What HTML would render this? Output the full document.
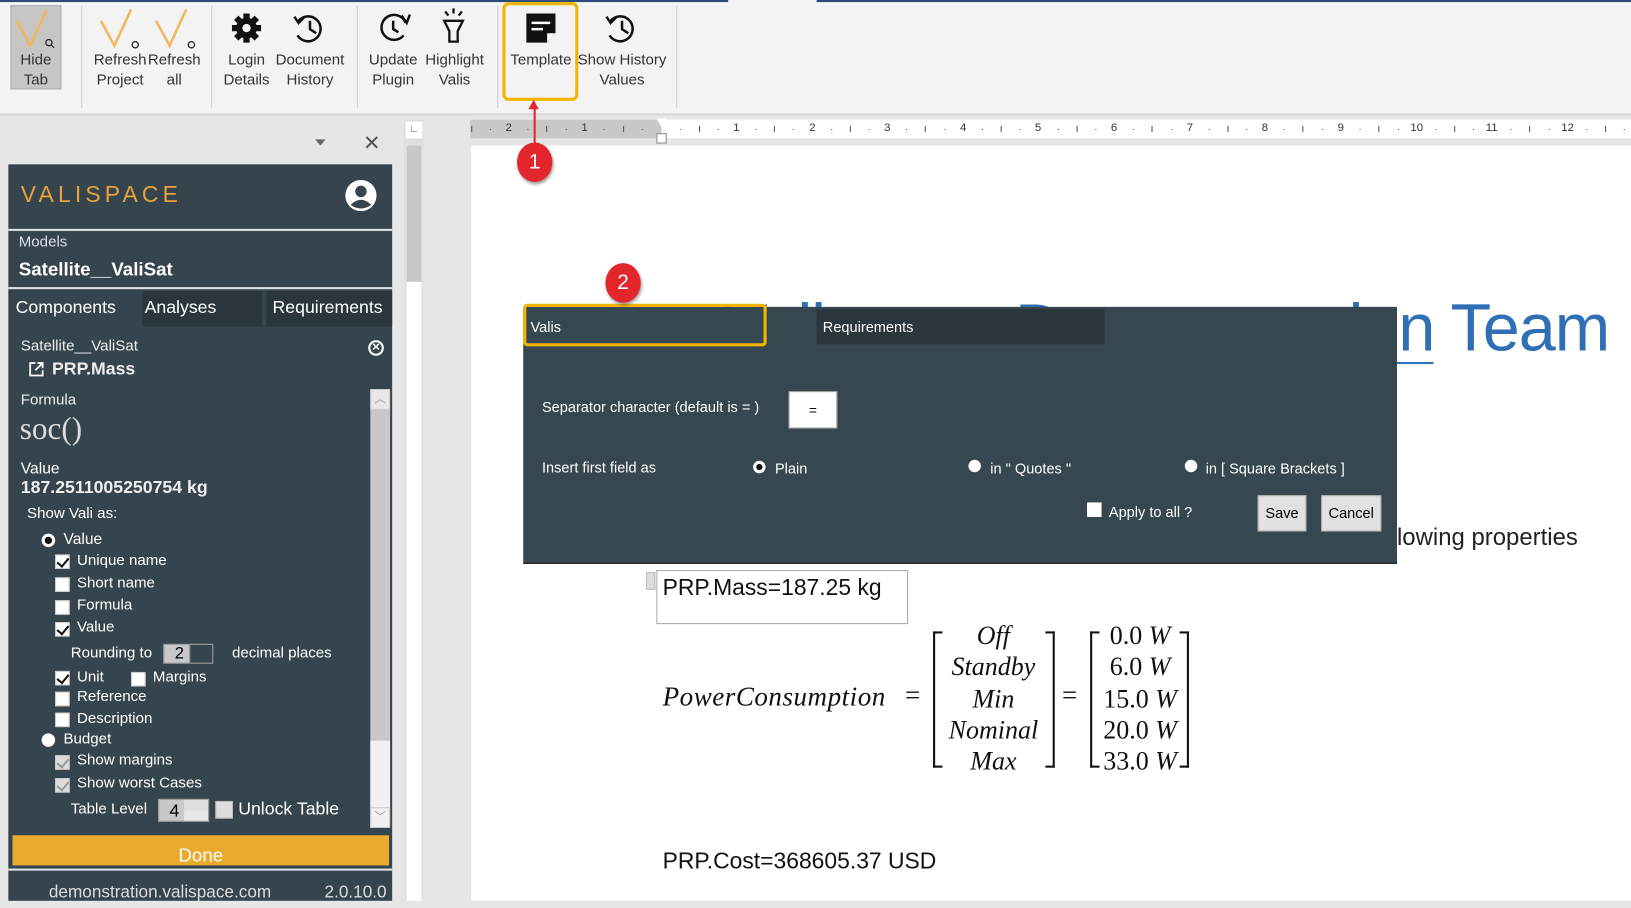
<!DOCTYPE html>
<html><head><meta charset="utf-8"><style>
*{box-sizing:border-box;margin:0;padding:0}
html,body{width:1631px;height:908px;overflow:hidden;background:#e6e6e6}
#w{position:absolute;left:0;top:0;width:1568px;height:873px;transform:scale(1.0402);transform-origin:0 0;font-family:"Liberation Sans",sans-serif;overflow:hidden}
.a{position:absolute}
.rb{font-size:14.5px;color:#333;text-align:center;line-height:19px}
.sep{position:absolute;top:6px;width:1px;height:98px;background:#cfcfcf}
.p{color:#fff;position:absolute;font-size:15px}
.cb{position:absolute;width:14px;height:14px;background:#fff;border:1px solid #ccc}
.ck::after{content:"";position:absolute;left:3px;top:0px;width:5px;height:9px;border:solid #111;border-width:0 2px 2px 0;transform:rotate(40deg)}
.cg{background:#ddd}.cg::after{border-color:#999!important}
.d{color:#fff;position:absolute;font-size:14px}
.m{font-family:"Liberation Serif",serif;font-style:italic;font-size:26px;color:#111;position:absolute}
.red{position:absolute;width:34px;height:38px;border-radius:50%;background:#e3262b;color:#fff;font-size:20px;text-align:center;line-height:38px;box-shadow:1px 2px 3px rgba(0,0,0,.4)}
.rn{position:absolute;top:117px;font-size:11px;color:#333;width:20px;margin-left:-10px;text-align:center}
.tk{position:absolute;top:121px;width:1px;height:6px;background:#555}
.dt{position:absolute;top:124px;width:1px;height:1px;background:#555}
</style></head><body><div id="w">
<!-- ribbon -->
<div class="a" style="left:0;top:0;width:1568px;height:111px;background:#f3f3f3;border-bottom:2px solid #d8d8d8"></div>
<div class="a" style="left:0;top:0;width:700px;height:2px;background:#2b4b7a"></div>
<div class="a" style="left:785px;top:0;width:783px;height:2px;background:#2b4b7a"></div>
<div class="a" style="left:10px;top:5px;width:49px;height:81px;background:#c6c6c6;border:1px solid #aaa"></div>
<svg class="a" style="left:0;top:0" width="700" height="60">
<g fill="none" stroke="#f0b860" stroke-width="2.5"><path d="M16 20 L29 44 L45 9"/><path d="M97 20 L110 44 L126 9"/><path d="M150 20 L163 44 L179 9"/></g>
<g fill="none" stroke="#222" stroke-width="1.2"><circle cx="47" cy="41" r="3"/><path d="M49 43 L52 46"/><circle cx="130" cy="43" r="3"/><circle cx="184" cy="43" r="3"/></g>
<g transform="translate(237,27)"><circle r="10" fill="#111"/><g fill="#111"><rect x="-3" y="-14" width="6" height="28"/><rect x="-14" y="-3" width="28" height="6"/><rect x="-3" y="-14" width="6" height="28" transform="rotate(45)"/><rect x="-3" y="-14" width="6" height="28" transform="rotate(-45)"/></g><circle r="4" fill="#f3f3f3"/></g>
<g fill="none" stroke="#111" stroke-width="2.4"><path d="M287 20 A12 12 0 1 1 286 34"/><path d="M298 20 V28 L304 32"/><path d="M283 16 L287 22 L292 17"/></g>
<g fill="none" stroke="#111" stroke-width="2.4"><path d="M390 22 A12 12 0 1 0 388 34"/><path d="M378 20 V28 L383 31"/><path d="M386 15 L391 22 L394 14"/></g>
<g fill="none" stroke="#111" stroke-width="2.2"><path d="M427 20 H445 L440 30 V40 H432 V30 Z"/><path d="M436 8 V13 M428 11 L431 15 M444 11 L441 15"/></g>
<g><path d="M506 13 H534 V32 L526 41 H506 Z" fill="#111"/><path d="M511 22 H529 M511 28 H522" stroke="#fff" stroke-width="2.5"/><path d="M526 41 V32 H534" fill="#fff"/></g>
<g fill="none" stroke="#111" stroke-width="2.4"><path d="M587 20 A12 12 0 1 1 586 34"/><path d="M598 20 V28 L604 32"/><path d="M583 16 L587 22 L592 17"/></g>
</svg>
<div class="a rb" style="left:10px;top:49px;width:49px">Hide<br>Tab</div>
<div class="a rb" style="left:88px;top:49px;width:55px">Refresh<br>Project</div>
<div class="a rb" style="left:140px;top:49px;width:55px">Refresh<br>all</div>
<div class="a rb" style="left:212px;top:49px;width:50px">Login<br>Details</div>
<div class="a rb" style="left:262px;top:49px;width:72px">Document<br>History</div>
<div class="a rb" style="left:352px;top:49px;width:52px">Update<br>Plugin</div>
<div class="a rb" style="left:404px;top:49px;width:66px">Highlight<br>Valis</div>
<div class="a rb" style="left:487px;top:49px;width:66px">Template</div>
<div class="a rb" style="left:552px;top:49px;width:92px">Show History<br>Values</div>
<div class="sep" style="left:78px"></div><div class="sep" style="left:203px"></div><div class="sep" style="left:343px"></div><div class="sep" style="left:478px"></div><div class="sep" style="left:650px"></div>
<div class="a" style="left:483px;top:2px;width:73px;height:95px;border:3px solid #f4b400;border-radius:6px"></div>
<!-- left task pane -->
<div class="a" style="left:0;top:113px;width:384px;height:760px;background:#e6e6e6"></div>
<div class="a" style="left:303px;top:134px;border:5px solid transparent;border-top:6px solid #666"></div>
<div class="a" style="left:349px;top:125px;font-size:20px;color:#555">✕</div>
<div class="a" style="left:8px;top:158px;width:369px;height:715px;background:#36444d"></div>
<div class="a" style="left:20px;top:174px;font-size:22px;letter-spacing:4px;color:#e8a33a">VALISPACE</div>
<svg class="a" style="left:331px;top:172px" width="32" height="32"><circle cx="16" cy="16" r="15" fill="#fff"/><circle cx="16" cy="12" r="5.5" fill="#36444d"/><path d="M6 25 Q16 15 26 25 Q16 32 6 25Z" fill="#36444d"/></svg>
<div class="a" style="left:8px;top:220px;width:369px;height:2px;background:#dfe3e5"></div>
<div class="p" style="left:18px;top:225px;font-size:14.5px;color:#dde">Models</div>
<div class="p" style="left:18px;top:249px;font-size:18px;font-weight:bold">Satellite__ValiSat</div>
<div class="a" style="left:8px;top:276px;width:369px;height:2px;background:#dfe3e5"></div>
<div class="a" style="left:137px;top:280px;width:115px;height:34px;background:#2b353c"></div>
<div class="a" style="left:256px;top:280px;width:121px;height:34px;background:#2b353c"></div>
<div class="p" style="left:15px;top:286px;font-size:17px">Components</div>
<div class="p" style="left:139px;top:286px;font-size:17px">Analyses</div>
<div class="p" style="left:262px;top:286px;font-size:17px">Requirements</div>
<div class="p" style="left:20px;top:325px;font-size:14.5px;color:#eee">Satellite__ValiSat</div>
<div class="a" style="left:354px;top:327px;width:15px;height:15px;border:2px solid #fff;border-radius:50%;color:#fff;font-size:10px;line-height:11px;text-align:center;font-weight:bold">✕</div>
<svg class="a" style="left:27px;top:347px" width="16" height="16"><path d="M7 2 H2 V14 H14 V9 M9 2 H14 V7 M14 2 L7 9" fill="none" stroke="#fff" stroke-width="1.7"/></svg>
<div class="p" style="left:50px;top:345px;font-size:17px;font-weight:bold;color:#eee">PRP.Mass</div>
<div class="p" style="left:20px;top:377px;font-size:14.5px;color:#eee">Formula</div>
<div class="p" style="left:19px;top:396px;font-size:30px;font-family:'Liberation Serif',serif;color:#ddd">soc()</div>
<div class="p" style="left:20px;top:442px;font-size:15px">Value</div>
<div class="p" style="left:20px;top:459px;font-size:17px;font-weight:bold;color:#eee">187.2511005250754 kg</div>
<div class="p" style="left:26px;top:486px;font-size:14.5px">Show Vali as:</div>
<div class="a" style="left:356px;top:374px;width:19px;height:422px;background:#c8c8c8"></div>
<div class="a" style="left:356px;top:374px;width:19px;height:20px;background:#e8e8e8;border:1px solid #ccc;color:#999;font-size:11px;text-align:center">︿</div>
<div class="a" style="left:356px;top:712px;width:19px;height:84px;background:#f0f0f0"></div>
<div class="a" style="left:356px;top:776px;width:19px;height:20px;background:#f0f0f0;border:1px solid #ccc;color:#999;font-size:11px;text-align:center">﹀</div>
<div class="a" style="left:40px;top:513px;width:13px;height:13px;border-radius:50%;background:#fff"></div><div class="a" style="left:43px;top:516px;width:7px;height:7px;border-radius:50%;background:#111"></div>
<div class="p" style="left:61px;top:510px">Value</div>
<div class="cb ck" style="left:53px;top:533px"></div><div class="p" style="left:74px;top:531px;font-size:14.5px">Unique name</div>
<div class="cb" style="left:53px;top:555px"></div><div class="p" style="left:74px;top:553px;font-size:14.5px">Short name</div>
<div class="cb" style="left:53px;top:577px"></div><div class="p" style="left:74px;top:574px;font-size:14.5px">Formula</div>
<div class="cb ck" style="left:53px;top:598px"></div><div class="p" style="left:74px;top:595px;font-size:14.5px">Value</div>
<div class="p" style="left:68px;top:620px;font-size:14.5px">Rounding to</div>
<div class="a" style="left:157px;top:619px;width:48px;height:19px;background:#c8c8c8;border:1px solid #999;font-size:16px;padding-left:10px;line-height:18px">2</div>
<div class="a" style="left:182px;top:619px;width:23px;height:19px;background:#36444d;border:1px solid #999"></div>
<div class="p" style="left:223px;top:620px;font-size:14.5px">decimal places</div>
<div class="cb ck" style="left:53px;top:645px"></div><div class="p" style="left:74px;top:643px;font-size:14.5px">Unit</div>
<div class="cb" style="left:126px;top:646px"></div><div class="p" style="left:147px;top:643px;font-size:14.5px">Margins</div>
<div class="cb" style="left:53px;top:665px"></div><div class="p" style="left:74px;top:662px;font-size:14.5px">Reference</div>
<div class="cb" style="left:53px;top:685px"></div><div class="p" style="left:74px;top:683px;font-size:14.5px">Description</div>
<div class="a" style="left:40px;top:705px;width:13px;height:13px;border-radius:50%;background:#fff"></div>
<div class="p" style="left:61px;top:703px;font-size:14.5px">Budget</div>
<div class="cb ck cg" style="left:53px;top:726px"></div><div class="p" style="left:74px;top:723px;font-size:14.5px">Show margins</div>
<div class="cb ck cg" style="left:53px;top:748px"></div><div class="p" style="left:74px;top:745px;font-size:14.5px">Show worst Cases</div>
<div class="p" style="left:68px;top:770px;font-size:14.5px">Table Level</div>
<div class="a" style="left:152px;top:768px;width:49px;height:22px;background:#c8c8c8;border:1px solid #999;font-size:17px;padding-left:10px;line-height:22px">4</div>
<div class="a" style="left:177px;top:769px;width:23px;height:20px;background:#e8e8e8;border-top:10px solid #ddd"></div>
<div class="a" style="left:207px;top:770px;width:17px;height:17px;background:#ddd;border:1px solid #bbb"></div>
<div class="p" style="left:229px;top:768px;font-size:17px">Unlock Table</div>
<div class="a" style="left:12px;top:803px;width:362px;height:29px;background:#eaaa2e;color:#fff;font-size:18px;text-align:center;line-height:38px;overflow:hidden">Done</div>
<div class="a" style="left:8px;top:835px;width:369px;height:2px;background:#dfe3e5"></div>
<div class="p" style="left:47px;top:849px;font-size:16.5px;color:#ddd">demonstration.valispace.com</div>
<div class="p" style="left:312px;top:849px;font-size:16.5px;color:#ddd">2.0.10.0</div>
<!-- rulers -->
<div class="a" style="left:388px;top:115px;width:19px;height:758px;background:#e0e0e0"></div>
<div class="a" style="left:390px;top:117px;width:16px;height:16px;background:#fff;font-size:10px;color:#555;text-align:center;line-height:16px">∟</div>
<div class="a" style="left:391px;top:140px;width:14px;height:131px;background:#c8c8c8"></div>
<div class="a" style="left:391px;top:271px;width:14px;height:602px;background:#fff"></div>
<div class="a" style="left:452px;top:115px;width:1116px;height:18px;background:#fff"></div>
<div class="a" style="left:452px;top:115px;width:184px;height:18px;background:#c8c8c8"></div>
<div class="rn" style="left:489px">2</div><div class="rn" style="left:562px">1</div>
<div class="rn" style="left:708px">1</div><div class="rn" style="left:781px">2</div><div class="rn" style="left:853px">3</div><div class="rn" style="left:926px">4</div><div class="rn" style="left:998px">5</div><div class="rn" style="left:1071px">6</div><div class="rn" style="left:1144px">7</div><div class="rn" style="left:1216px">8</div><div class="rn" style="left:1289px">9</div><div class="rn" style="left:1362px">10</div><div class="rn" style="left:1434px">11</div><div class="rn" style="left:1507px">12</div>
<div class="tk" style="left:453px"></div><div class="tk" style="left:525px"></div><div class="tk" style="left:599px"></div><div class="tk" style="left:672px"></div><div class="tk" style="left:744px"></div><div class="tk" style="left:817px"></div><div class="tk" style="left:889px"></div><div class="tk" style="left:962px"></div><div class="tk" style="left:1035px"></div><div class="tk" style="left:1107px"></div><div class="tk" style="left:1180px"></div><div class="tk" style="left:1252px"></div><div class="tk" style="left:1325px"></div><div class="tk" style="left:1398px"></div><div class="tk" style="left:1470px"></div><div class="tk" style="left:1543px"></div>
<div class="dt" style="left:471px"></div><div class="dt" style="left:507px"></div><div class="dt" style="left:544px"></div><div class="dt" style="left:580px"></div><div class="dt" style="left:617px"></div><div class="dt" style="left:654px"></div><div class="dt" style="left:690px"></div><div class="dt" style="left:726px"></div><div class="dt" style="left:762px"></div><div class="dt" style="left:799px"></div><div class="dt" style="left:835px"></div><div class="dt" style="left:871px"></div><div class="dt" style="left:908px"></div><div class="dt" style="left:944px"></div><div class="dt" style="left:980px"></div><div class="dt" style="left:1017px"></div><div class="dt" style="left:1053px"></div><div class="dt" style="left:1089px"></div><div class="dt" style="left:1126px"></div><div class="dt" style="left:1162px"></div><div class="dt" style="left:1198px"></div><div class="dt" style="left:1234px"></div><div class="dt" style="left:1271px"></div><div class="dt" style="left:1307px"></div><div class="dt" style="left:1344px"></div><div class="dt" style="left:1380px"></div><div class="dt" style="left:1416px"></div><div class="dt" style="left:1452px"></div><div class="dt" style="left:1489px"></div><div class="dt" style="left:1525px"></div><div class="dt" style="left:1561px"></div>
<div class="a" style="left:631px;top:114px;border:5px solid transparent;border-top:8px solid #fff"></div>
<div class="a" style="left:631px;top:128px;width:10px;height:10px;background:#fff;border:1px solid #888"></div>
<!-- page -->
<div class="a" style="left:453px;top:140px;width:1115px;height:726px;background:#fff"></div>
<div class="a" style="left:0;top:866px;width:1568px;height:7px;background:#e6e6e6"></div>
<div class="a" style="right:21px;top:278px;font-size:64px;letter-spacing:-1px;color:#2f6fb5;white-space:nowrap;text-align:right">Valispace Demonstration Team</div>
<div class="a" style="left:1343px;top:348px;width:35px;height:2px;background:#2f6fb5"></div>
<div class="a" style="left:1343px;top:503px;font-size:23px;color:#222">lowing properties</div>
<!-- dialog -->
<div class="a" style="left:503px;top:295px;width:840px;height:247px;background:#37474f;border-bottom:1px solid #111"></div>
<div class="a" style="left:785px;top:297px;width:277px;height:34px;background:#2b363d"></div>
<div class="a" style="left:503px;top:292px;width:234px;height:41px;border:3px solid #f4b400;border-radius:4px"></div>
<div class="d" style="left:510px;top:306px">Valis</div>
<div class="d" style="left:791px;top:306px">Requirements</div>
<div class="d" style="left:521px;top:383px">Separator character (default is = )</div>
<div class="a" style="left:758px;top:376px;width:47px;height:36px;background:#fff;border:1px solid #999;font-size:13px;text-align:center;line-height:36px">=</div>
<div class="d" style="left:521px;top:441px">Insert first field as</div>
<div class="a" style="left:724px;top:443px;width:12px;height:12px;border-radius:50%;background:#fff"></div><div class="a" style="left:727px;top:446px;width:6px;height:6px;border-radius:50%;background:#111"></div>
<div class="d" style="left:745px;top:442px">Plain</div>
<div class="a" style="left:931px;top:442px;width:12px;height:12px;border-radius:50%;background:#fff"></div>
<div class="d" style="left:952px;top:442px">in " Quotes "</div>
<div class="a" style="left:1139px;top:442px;width:12px;height:12px;border-radius:50%;background:#fff"></div>
<div class="d" style="left:1159px;top:442px">in [ Square Brackets ]</div>
<div class="a" style="left:1045px;top:483px;width:14px;height:14px;background:#fff"></div>
<div class="d" style="left:1066px;top:484px">Apply to all ?</div>
<div class="a" style="left:1209px;top:476px;width:47px;height:35px;background:#e1e1e1;border:1px solid #aaa;font-size:14px;text-align:center;line-height:33px">Save</div>
<div class="a" style="left:1270px;top:476px;width:58px;height:35px;background:#e1e1e1;border:1px solid #aaa;font-size:14px;text-align:center;line-height:33px">Cancel</div>
<!-- doc content -->
<div class="a" style="left:621px;top:550px;width:9px;height:17px;background:#ddd;border:1px solid #bbb"></div>
<div class="a" style="left:631px;top:548px;width:242px;height:52px;border:1px solid #aaa"></div>
<div class="a" style="left:637px;top:552px;font-size:22px;color:#111">PRP.Mass=187.25 kg</div>
<div class="m" style="left:637px;top:655px;letter-spacing:0.5px">PowerConsumption</div>
<div class="a" style="left:870px;top:654px;font-size:26px;color:#111;font-family:'Liberation Serif',serif">=</div>
<div class="a" style="left:897px;top:607px;width:9px;height:131px;border:2px solid #111;border-right:none"></div>
<div class="a" style="left:1005px;top:607px;width:9px;height:131px;border:2px solid #111;border-left:none"></div>
<div class="m" style="left:904px;top:597px;width:102px;text-align:center;line-height:30.3px;font-size:25px">Off<br>Standby<br>Min<br>Nominal<br>Max</div>
<div class="a" style="left:1021px;top:654px;font-size:26px;color:#111;font-family:'Liberation Serif',serif">=</div>
<div class="a" style="left:1048px;top:607px;width:9px;height:131px;border:2px solid #111;border-right:none"></div>
<div class="a" style="left:1134px;top:607px;width:9px;height:131px;border:2px solid #111;border-left:none"></div>
<div class="a" style="left:1054px;top:597px;width:84px;text-align:center;line-height:30.3px;font-size:25px;font-family:'Liberation Serif',serif;color:#111">0.0 <i>W</i><br>6.0 <i>W</i><br>15.0 <i>W</i><br>20.0 <i>W</i><br>33.0 <i>W</i></div>
<div class="a" style="left:637px;top:815px;font-size:22px;color:#111">PRP.Cost=368605.37 USD</div>
<!-- annotations -->
<div class="a" style="left:513px;top:100px;width:2px;height:40px;background:#e3262b"></div>
<div class="a" style="left:508px;top:96px;border:5px solid transparent;border-bottom:9px solid #e3262b;border-top:none"></div>
<div class="red" style="left:497px;top:137px">1</div>
<div class="red" style="left:582px;top:253px">2</div>
</div></body></html>
